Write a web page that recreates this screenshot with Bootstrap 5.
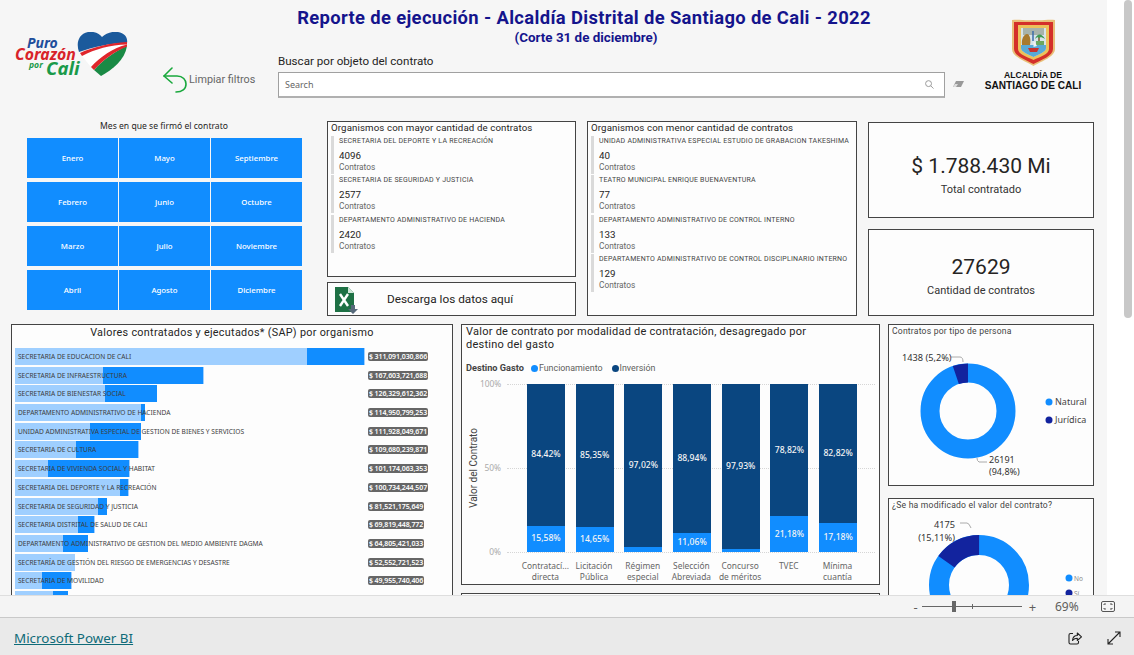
<!DOCTYPE html>
<html lang="es">
<head>
    <meta charset="UTF-8">
    <meta name="viewport" content="width=device-width, initial-scale=1.0">
    <title>Reporte de ejecución - Power BI</title>
    <link href="https://cdn.jsdelivr.net/npm/bootstrap@5.3.0/dist/css/bootstrap.min.css" rel="stylesheet">
    <style>
        html, body { height: 100%; overflow: hidden; }
        body { background: #fff; font-family: "Noto Sans", "Open Sans", sans-serif; color: #252423; }
        .din { font-family: Roboto, "Noto Sans", sans-serif; }
        .viewer { height: 595px; }
        .report { width: 1107px; background: #f6f6f6; overflow: hidden; }
        .scroll-strip { flex: 1; padding: 0 2px 0 17px; }
        .scroll-thumb { height: 318px; background: #c8c8c8; border-radius: 4px; }

        .top-head { height: 121px; }
        .logo-col { width: 278px; padding: 32px 0 0 15px; }
        .clear-box { margin: 35px 0 0 34px; font-size: 10.8px; color: #666; gap: 2px; height: 26px; }
        .title-col { width: 688px; }
        .report-title { margin: 7.5px 76px 0 0; font-size: 18.4px; line-height: 20px; font-weight: 700; color: #14148c; letter-spacing: .35px; white-space: nowrap; }
        .report-sub { margin: 1px 72px 0 0; font-size: 13.4px; line-height: 17px; font-weight: 700; color: #14148c; }
        .search-label { margin-top: 8.5px; font-size: 11.6px; line-height: 15px; color: #252423; }
        .search-row { margin-top: 2.5px; }
        .search-field { width: 667px; height: 26px; background: #fff; border: 1px solid #a0a0a0; border-bottom: 2px solid #b0b0b0; padding: 0 10px 0 6px; }
        .search-field .form-control { border: 0; padding: 0; font-size: 9px; background: transparent; box-shadow: none; height: 22px; min-height: 0; border-radius: 0; }
        .search-field .form-control::placeholder { color: #666; opacity: 1; }
        .erase-ic { margin-left: 8px; }
        .city-col { width: 134px; padding-top: 19px; text-align: center; }
        .city-a { font: 700 8.6px/10px "Liberation Sans", sans-serif; color: #111; margin-top: 4px; }
        .city-b { font: 700 10.1px/11px "Liberation Sans", sans-serif; color: #111; white-space: nowrap; }

        .mid-row { height: 203px; padding-left: 27px; }
        .month-col { width: 274px; margin-right: 26px; }
        .month-title { font-size: 8.6px; line-height: 11px; height: 17px; color: #252423; text-align: center; }
        .month-grid { display: grid; grid-template-columns: 91px 91px 91px; grid-template-rows: repeat(4, 40px); column-gap: 1px; row-gap: 4px; }
        .month-btn { background: #118dff; color: #fff; font-size: 7.8px; font-weight: 500; border: 0; border-radius: 0; padding: 1px 0 0; display: flex; align-items: center; justify-content: center; }
        .vis { background: #fdfdfd; border: 1.5px solid #444; border-radius: 0; overflow: hidden; }
        .top-col { width: 249px; gap: 5px; margin-right: 11px; height: 195px; }
        .list-box { height: 156px; padding: 0 3px; flex: none; }
        .menor-box { width: 270px; height: 195px; margin-right: 11px; padding: 0 3px; }
        .list-title { font-size: 9.7px; line-height: 12px; letter-spacing: .12px; color: #252423; white-space: nowrap; }
        .org-item { border-left: 3px solid #dadada; padding-left: 5px; height: 38px; margin-top: 1.5px; }
        .org-name { font-size: 7px; line-height: 9px; padding-top: 1px; box-sizing: content-box; color: #444; white-space: nowrap; letter-spacing: .22px; }
        .org-num { font-size: 9.8px; line-height: 13px; margin-top: 3px; color: #252423; }
        .org-unit { font-size: 8.3px; line-height: 10px; color: #666; }
        .dl-box { height: 34px; padding-left: 6px; padding-top: 1px; font-size: 11.8px; color: #252423; flex: none; }
        .dl-text { margin-left: 29px; }
        .kpi-col { width: 226px; height: 195px; padding-top: 1px; }
        .kpi { text-align: center; justify-content: center; }
        .kpi-a { height: 96px; margin-bottom: 11px; padding-top: 10px; }
        .kpi-b { height: 87px; padding-top: 7px; }
        .kpi-num { font-size: 21px; line-height: 28px; color: #252423; }
        .kpi-lab { font-size: 11px; line-height: 16px; color: #333; margin-top: 2px; }

        .low-row { padding-left: 11px; gap: 8px; height: 271px; }
        .org-box { width: 442px; height: 320px; padding: 0 3px; flex: none; }
        .org-box-title { font-size: 10.8px; line-height: 15px; margin: 0 0 8px; letter-spacing: .3px; color: #252423; text-align: center; }
        .hbar-row { height: 17px; margin-bottom: 1.7px; gap: 3px; }
        .hbar-track { width: 350px; height: 17px; position: relative; flex: none; }
        .hbar-light { background: #9fcfff; height: 100%; }
        .hbar-dark { background: #118dff; height: 100%; }
        .hbar-name { position: absolute; left: 3px; top: 0; line-height: 17px; font-size: 6.6px; color: #3c3c3c; white-space: nowrap; }
        .hbar-val { background: #666; color: #fff; font-size: 7px; font-weight: 600; line-height: 9px; padding: 0 1px; border-radius: 2px; white-space: nowrap; letter-spacing: -.1px; }
        .hbar-val:empty { width: 55px; height: 9px; }

        .mod-col { width: 419px; gap: 8px; }
        .mod-box { height: 261px; padding: 0 4px; flex: none; }
        .mod-title { font-size: 11px; line-height: 13px; letter-spacing: .25px; color: #252423; height: 32px; max-width: 345px; }
        .mod-legend { font-size: 8.9px; line-height: 12px; margin-top: 5px; color: #605e5c; gap: 1px; }
        .mod-legend b { color: #444; font-weight: 700; margin-right: 6px; font-size: 9.2px; }
        .ldot { width: 7px; height: 7px; border-radius: 50%; display: inline-block; }
        .bg-fun { background: #118dff; }
        .bg-inv { background: #0a4680; }
        .chart-wrap { margin-top: 10px; }
        .y-title { width: 14px; writing-mode: vertical-rl; transform: rotate(180deg); font-size: 10px; text-align: center; color: #444; height: 168px; }
        .y-ticks { width: 21px; height: 168px; font-size: 8.4px; color: #aaa; text-align: right; justify-content: space-between; }
        .y-ticks span { line-height: 0; }
        .plot { width: 370px; height: 168px; margin-left: 6px; padding-left: 20px; gap: 10.7px; position: relative; }
        .grid-line { position: absolute; left: 0; right: 0; border-top: 1px dotted #d6d6d6; }
        .col-stack { width: 38px; height: 168px; position: relative; }
        .seg-txt { color: #f4f4f4; font-size: 8.6px; font-weight: 500; }
        .cat-row { margin: 8px 0 0 55px; }
        .cat-lab { width: 48.7px; font-size: 8.4px; line-height: 11px; color: #666; text-align: center; white-space: nowrap; }
        .next-box { height: 60px; flex: none; }

        .side-col { width: 206px; gap: 12px; }
        .donut-a { height: 162px; flex: none; }
        .donut-b { height: 170px; flex: none; }
        .side-title { font-size: 8.6px; line-height: 12px; margin: 0 0 0 3px; letter-spacing: .2px; color: #444; white-space: nowrap; }
        .don-svg { display: block; }
        .don-svg text { font-family: "Noto Sans", sans-serif; }

        .zoom-bar { height: 23px; background: #f4f4f4; border-top: 1px solid #dedede; border-bottom: 1px solid #c9c9c9; padding-left: 911px; font-size: 12px; color: #605e5c; }
        .z-sign { width: 9px; text-align: center; line-height: 20px; font-size: 13px; }
        .z-track { width: 100px; height: 1px; background: #666; position: relative; margin: 0 1px 0 2px; }
        .z-thumb { position: absolute; left: 30px; top: -5px; width: 4px; height: 11px; background: #666; }
        .z-tick { position: absolute; left: 50px; top: -2px; width: 1px; height: 5px; background: #666; }
        .z-plus { margin-left: 5px; }
        .z-pct { margin-left: 18px; width: 33px; font-size: 12px; }
        .z-fit { margin-left: 13px; }
        .page-foot { height: 37px; background: #eaeaea; padding: 3px 13px 0 14px; }
        .pbi-link { font-size: 13.4px; color: #0f6b78; text-decoration: underline; }
        .foot-ic { gap: 25px; }
    </style>
</head>
<body>
    <div class="viewer d-flex">
        <div class="report">
            <div class="top-head d-flex">
                <div class="logo-col d-flex align-items-start">
                    <svg width="114" height="50" viewBox="0 0 114 50">
                        <path d="M64 20 C61 12 63 2 73 0 C80 -1 85 2 87 5 C91 1 98 -1 103 0 C110 1 113 6 112 11 C95 11 78 15 64 20Z" fill="#1b5a9c"/>
                        <path d="M67 24 C80 17 95 13 112 12 C100 17 85 25 76 35Z" fill="#fff"/>
                        <path d="M65 21 C78 15 95 11 112 10 L112 12.5 C95 13 80 17 67 24Z" fill="#e0262c"/>
                        <path d="M79 38 C88 28 100 19 112 14 C110 28 97 38 86 44Z" fill="#1a8a45"/>
                        <path d="M76 35 C85 25 98 16 112 12.5 L112 14.5 C100 19 88 28 79 38Z" fill="#e0262c"/>
                        <text x="12" y="16" font-family="Noto Sans" font-style="italic" font-weight="700" font-size="14" fill="#1f4e9c">Puro</text>
                        <text x="0" y="28" font-family="Noto Sans" font-style="italic" font-weight="700" font-size="15.8" fill="#d8232a">Corazón</text>
                        <text x="14" y="36" font-family="Noto Sans" font-style="italic" font-weight="700" font-size="8.6" fill="#1a9a4a">por</text>
                        <text x="31" y="43" font-family="Noto Sans" font-style="italic" font-weight="700" font-size="18.6" fill="#1a9a4a">Cali</text>
                    </svg>
                    <div class="clear-box d-flex align-items-center flex-shrink-0">
                        <svg width="24" height="26" viewBox="0 0 24 26" fill="none" stroke="#19a83c" stroke-width="1.6" stroke-linecap="round" stroke-linejoin="round">
                            <path d="M9 1 L1 9 L9 16"/>
                            <path d="M1 9 H14 C20 9 23 13 23 17 C23 22 19 25 13 25"/>
                        </svg>
                        <span class="din">Limpiar filtros</span>
                    </div>
                </div>
                <div class="title-col">
                    <div class="report-title text-center din">Reporte de ejecución - Alcaldía Distrital de Santiago de Cali - 2022</div>
                    <div class="report-sub text-center din">(Corte 31 de diciembre)</div>
                    <div class="search-label din">Buscar por objeto del contrato</div>
                    <div class="search-row d-flex align-items-center">
                        <div class="search-field d-flex align-items-center">
                            <input class="form-control" type="text" placeholder="Search">
                            <svg width="9" height="9" viewBox="0 0 9 9" fill="none" stroke="#999" stroke-width="1"><circle cx="3.6" cy="3.6" r="3"/><path d="M5.8 5.8 L8.6 8.6"/></svg>
                        </div>
                        <svg class="erase-ic" width="11" height="7" viewBox="0 0 11 7"><path d="M3 0 H11 L8 6 H0Z" fill="#999"/><path d="M0 6 L2 3 H5 L3 6Z" fill="#ddd"/></svg>
                    </div>
                </div>
                <div class="city-col d-flex flex-column align-items-center">
                    <svg width="43" height="47" viewBox="0 0 43 47">
                        <path d="M0 1 C8 0 12 2 21.500 1 C30 2 36 0 43 1 V30 C43 38 30 42 21.500 47 C13 42 0 38 0 30Z" fill="#e9bf78"/>
                        <path d="M2 3 H41 V30 C41 37 29 41 21.500 45 C14 41 2 37 2 30Z" fill="#d42f2a"/>
                        <path d="M6 6 H37 V30 C37 35 28 38 21.500 41 C15 38 6 35 6 30Z" fill="#ecc15a"/>
                        <path d="M9 9 H34 V29 C34 33 27 35 21.500 38 C16 35 9 33 9 29Z" fill="#d7e4ea"/>
                        <path d="M11 9 H32 V16 H11Z" fill="#a7b3ab"/>
                        <path d="M9 26 H34 V29 C34 33 27 35 21.500 38 C16 35 9 33 9 29Z" fill="#58a9d6"/>
                        <path d="M10 26 C9 20 12 15 15 15 C18 15 19 21 18 26Z" fill="#a87a2e"/>
                        <path d="M27 26 V18" stroke="#7a5a2a" stroke-width="1.500"/>
                        <path d="M23 20 C25 14 30 14 33 20 C30 18 28 18 27 19 C26 18 25 18 23 20Z" fill="#3d9a52"/>
                        <path d="M24 26 H32 V22 H24Z" fill="#6aa860"/>
                        <path d="M16 29 H27 L25 33 H18Z" fill="#c8322c"/>
                        <path d="M21.500 28 V21 L25 27Z" fill="#f2f2f2"/>
                        <path d="M21 22 V12" stroke="#3a6ca8" stroke-width="1.500"/>
                    </svg>
                    <div class="city-a">ALCALDÍA DE</div>
                    <div class="city-b">SANTIAGO DE CALI</div>
                </div>
            </div>

            <div class="mid-row d-flex">
                <div class="month-col">
                    <div class="month-title">Mes en que se firmó el contrato</div>
                    <div class="month-grid" id="month-grid"></div>
                </div>
                <div class="top-col d-flex flex-column">
                    <div class="vis list-box">
                        <div class="list-title din">Organismos con mayor cantidad de contratos</div>
                        <div id="mayor-list"></div>
                    </div>
                    <div class="vis dl-box d-flex align-items-center">
                        <svg width="24" height="28" viewBox="0 0 24 28">
                            <path d="M1 1 H14 L20 7 V26 H1Z" fill="#1e7145"/>
                            <path d="M14 1 L20 7 H14Z" fill="#cfe6d8"/>
                            <path d="M6 8 L14 20 M14 8 L6 20" stroke="#fff" stroke-width="2.4"/>
                            <path d="M17 19 H21 V23 H24 L19 28 L14 23 H17Z" fill="#56697a"/>
                        </svg>
                        <span class="dl-text din">Descarga los datos aquí</span>
                    </div>
                </div>
                <div class="vis menor-box">
                    <div class="list-title din">Organismos con menor cantidad de contratos</div>
                    <div id="menor-list"></div>
                </div>
                <div class="kpi-col">
                    <div class="vis kpi kpi-a d-flex flex-column">
                        <div class="kpi-num din">$ 1.788.430 Mi</div>
                        <div class="kpi-lab din">Total contratado</div>
                    </div>
                    <div class="vis kpi kpi-b d-flex flex-column">
                        <div class="kpi-num din">27629</div>
                        <div class="kpi-lab din">Cantidad de contratos</div>
                    </div>
                </div>
            </div>

            <div class="low-row d-flex">
                <div class="vis org-box">
                    <div class="org-box-title din">Valores contratados y ejecutados* (SAP) por organismo</div>
                    <div id="hbars"></div>
                </div>
                <div class="mod-col d-flex flex-column">
                    <div class="vis mod-box">
                        <div class="mod-title din">Valor de contrato por modalidad de contratación, desagregado por destino del gasto</div>
                        <div class="mod-legend d-flex align-items-center din">
                            <b>Destino Gasto</b><span class="ldot bg-fun"></span><span>Funcionamiento</span><span class="ldot bg-inv ms-2"></span><span>Inversión</span>
                        </div>
                        <div class="chart-wrap d-flex">
                            <div class="y-title din">Valor del Contrato</div>
                            <div class="y-ticks d-flex flex-column"><span>100%</span><span>50%</span><span>0%</span></div>
                            <div class="plot d-flex" id="plot"></div>
                        </div>
                        <div class="cat-row d-flex" id="cats"></div>
                    </div>
                    <div class="vis next-box"></div>
                </div>
                <div class="side-col d-flex flex-column">
                    <div class="vis donut-a">
                        <div class="side-title din">Contratos por tipo de persona</div>
                        <svg class="don-svg" width="203" height="148" viewBox="0 0 203 148">
                            <circle cx="79" cy="74" r="38" fill="none" stroke="#118dff" stroke-width="19"/>
                            <circle cx="79" cy="74" r="38" fill="none" stroke="#12239e" stroke-width="19" stroke-dasharray="12.4 226.4" transform="rotate(-108.7 79 74)"/>
                            <path d="M62 20 H71 Q74 20 74 25" fill="none" stroke="#aaa"/>
                            <path d="M90 125 H98 M90 125 Q88 124 88 121" fill="none" stroke="#aaa"/>
                            <text x="13" y="24" font-size="9.2" fill="#333">1438 (5,2%)</text>
                            <text x="100" y="126" font-size="9" fill="#333">26191</text>
                            <text x="100" y="138" font-size="9" fill="#333">(94,8%)</text>
                            <circle cx="160" cy="65" r="3.5" fill="#118dff"/>
                            <text x="166" y="68" font-size="9" fill="#444">Natural</text>
                            <circle cx="160" cy="83" r="3.5" fill="#12239e"/>
                            <text x="166" y="86" font-size="9" fill="#444">Jurídica</text>
                        </svg>
                    </div>
                    <div class="vis donut-b">
                        <div class="side-title din">¿Se ha modificado el valor del contrato?</div>
                        <svg class="don-svg" width="203" height="156" viewBox="0 0 203 156">
                            <circle cx="90" cy="74" r="40" fill="none" stroke="#118dff" stroke-width="20"/>
                            <circle cx="90" cy="74" r="40" fill="none" stroke="#12239e" stroke-width="20" stroke-dasharray="38 213.3" transform="rotate(-144.4 90 74)"/>
                            <path d="M71 12 H78 Q80 12 82 17" fill="none" stroke="#aaa"/>
                            <text x="66" y="17" font-size="9.2" fill="#333" text-anchor="end">4175</text>
                            <text x="66" y="30" font-size="9.2" fill="#333" text-anchor="end">(15,11%)</text>
                            <circle cx="180" cy="67" r="3.5" fill="#118dff"/>
                            <text x="185" y="70" font-size="6.5" fill="#888">No</text>
                            <circle cx="180" cy="82" r="3.5" fill="#12239e"/>
                            <text x="185" y="85" font-size="6.5" fill="#888">Sí</text>
                        </svg>
                    </div>
                </div>
            </div>
        </div>
        <div class="scroll-strip"><div class="scroll-thumb"></div></div>
    </div>

    <div class="zoom-bar d-flex align-items-center">
        <span class="z-sign">-</span>
        <div class="z-track"><div class="z-thumb"></div><div class="z-tick"></div></div>
        <span class="z-sign z-plus">+</span>
        <span class="z-pct">69%</span>
        <svg class="z-fit" width="14" height="11" viewBox="0 0 14 11" fill="none" stroke="#555"><rect x=".5" y=".5" width="13" height="10" rx="1.5"/><path d="M3 4 V3 H5 M9 3 H11 V4 M11 7 V8 H9 M5 8 H3 V7"/></svg>
    </div>
    <div class="page-foot d-flex align-items-center justify-content-between">
        <a class="pbi-link" href="#">Microsoft Power BI</a>
        <div class="foot-ic d-flex align-items-center">
            <svg width="14" height="14" viewBox="0 0 14 14" fill="none" stroke="#222" stroke-width="1.1" stroke-linejoin="round"><path d="M5 2.5 H2.500 Q1 2.500 1 4 V11.500 Q1 13 2.500 13 H9 Q10.500 13 10.500 11.500 V10"/><path d="M4.500 9.500 C4.800 6.500 6.500 4.500 9.300 4.500 V2 L13.500 5.800 L9.300 9.500 V7.200 C7.500 7.200 5.800 8 4.500 9.500Z"/></svg>
            <svg width="14" height="14" viewBox="0 0 14 14" fill="none" stroke="#222" stroke-width="1.1"><path d="M1 13 L13 1 M8 1 H13 V6 M1 8 V13 H6"/></svg>
        </div>
    </div>

    <script src="https://cdn.jsdelivr.net/npm/bootstrap@5.3.0/dist/js/bootstrap.bundle.min.js"></script>
    <script>
        const months = ['Enero', 'Mayo', 'Septiembre', 'Febrero', 'Junio', 'Octubre', 'Marzo', 'Julio', 'Noviembre', 'Abril', 'Agosto', 'Diciembre'];
        document.getElementById('month-grid').innerHTML = months
            .map(m => `<button class="btn month-btn" type="button">${m}</button>`).join('');

        function orgList(id, items) {
            document.getElementById(id).innerHTML = items.map(it => `
                <div class="org-item">
                    <div class="org-name din">${it[0]}</div>
                    <div class="org-num din">${it[1]}</div>
                    <div class="org-unit din">Contratos</div>
                </div>`).join('');
        }
        orgList('mayor-list', [
            ['SECRETARIA DEL DEPORTE Y LA RECREACIÓN', 4096],
            ['SECRETARIA DE SEGURIDAD Y JUSTICIA', 2577],
            ['DEPARTAMENTO ADMINISTRATIVO DE HACIENDA', 2420]
        ]);
        orgList('menor-list', [
            ['UNIDAD ADMINISTRATIVA ESPECIAL ESTUDIO DE GRABACION TAKESHIMA', 40],
            ['TEATRO MUNICIPAL ENRIQUE BUENAVENTURA', 77],
            ['DEPARTAMENTO ADMINISTRATIVO DE CONTROL INTERNO', 133],
            ['DEPARTAMENTO ADMINISTRATIVO DE CONTROL DISCIPLINARIO INTERNO', 129]
        ]);

        // name, value, light width, dark width, light rest (px)
        const orgBars = [
            ['SECRETARIA DE EDUCACION DE CALI', '$ 311,091,030,866', 292, 57, 1],
            ['SECRETARIA DE INFRAESTRUCTURA', '$ 167,603,721,688', 88, 100, 1],
            ['SECRETARIA DE BIENESTAR SOCIAL', '$ 126,329,612,362', 90, 52, 0],
            ['DEPARTAMENTO ADMINISTRATIVO DE HACIENDA', '$ 114,950,799,253', 126, 4, 0],
            ['UNIDAD ADMINISTRATIVA ESPECIAL DE GESTION DE BIENES Y SERVICIOS', '$ 111,928,049,671', 75, 51, 0],
            ['SECRETARIA DE CULTURA', '$ 109,680,239,871', 61, 62, 1],
            ['SECRETARIA DE VIVIENDA SOCIAL Y HABITAT', '$ 101,174,063,353', 33, 81, 1],
            ['SECRETARIA DEL DEPORTE Y LA RECREACIÓN', '$ 100,734,244,507', 105, 8, 1],
            ['SECRETARIA DE SEGURIDAD Y JUSTICIA', '$ 81,521,175,649', 83, 9, 0],
            ['SECRETARIA DISTRITAL DE SALUD DE CALI', '$ 69,819,448,772', 63, 16, 1],
            ['DEPARTAMENTO ADMINISTRATIVO DE GESTION DEL MEDIO AMBIENTE DAGMA', '$ 64,805,421,033', 48, 25, 0],
            ['SECRETARÍA DE GESTIÓN DEL RIESGO DE EMERGENCIAS Y DESASTRE', '$ 52,552,721,523', 59, 0, 1],
            ['SECRETARIA DE MOVILIDAD', '$ 49,955,740,406', 27, 29, 1],
            ['', '', 38, 15, 0]
        ];
        document.getElementById('hbars').innerHTML = orgBars.map(b => `
            <div class="hbar-row d-flex align-items-center">
                <div class="hbar-track d-flex">
                    <div class="hbar-light" style="width:${b[2]}px"></div>
                    <div class="hbar-dark" style="width:${b[3]}px"></div>
                    <div class="hbar-light" style="width:${b[4]}px"></div>
                    <span class="hbar-name">${b[0]}</span>
                </div>
                <span class="hbar-val">${b[1]}</span>
            </div>`).join('');

        // % funcionamiento, label inversion, label funcionamiento, categoria
        const modal = [
            [15.58, '84,42%', '15,58%', 'Contratací...', 'directa'],
            [14.65, '85,35%', '14,65%', 'Licitación', 'Pública'],
            [2.98, '97,02%', '', 'Régimen', 'especial'],
            [11.06, '88,94%', '11,06%', 'Selección', 'Abreviada'],
            [2.07, '97,93%', '', 'Concurso', 'de méritos'],
            [21.18, '78,82%', '21,18%', 'TVEC', '&nbsp;'],
            [17.18, '82,82%', '17,18%', 'Mínima', 'cuantía']
        ];
        document.getElementById('plot').innerHTML =
            [0, 50, 100].map(p => `<div class="grid-line" style="top:${p}%"></div>`).join('') +
            modal.map(m => `
            <div class="col-stack d-flex flex-column">
                <div class="bg-inv flex-grow-1 d-flex align-items-center justify-content-center seg-txt">${m[1]}</div>
                <div class="bg-fun d-flex align-items-center justify-content-center seg-txt" style="height:${m[0]}%">${m[2]}</div>
            </div>`).join('');
        document.getElementById('cats').innerHTML = modal
            .map(m => `<div class="cat-lab">${m[3]}<br>${m[4]}</div>`).join('');
    </script>
</body>
</html>
